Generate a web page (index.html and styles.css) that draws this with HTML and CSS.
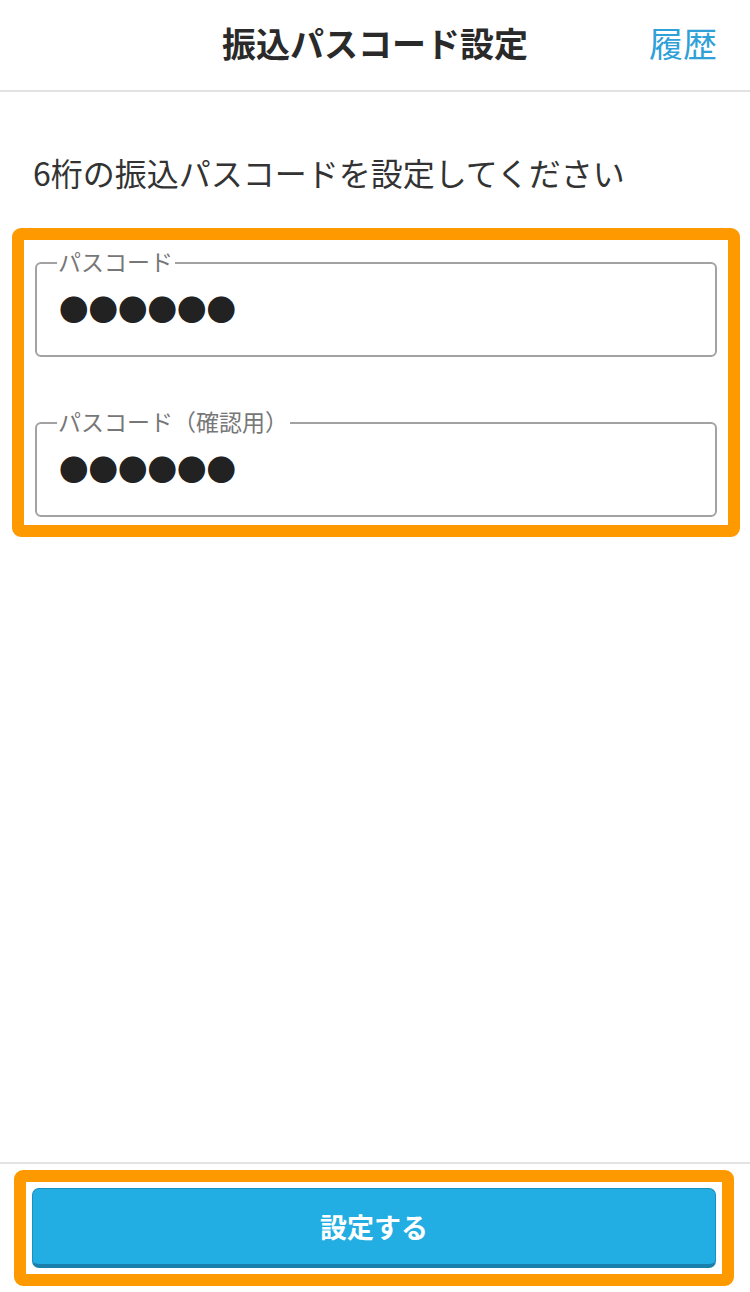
FILE: index.html
```html
<!DOCTYPE html>
<html lang="ja">
<head>
<meta charset="utf-8">
<title>振込パスコード設定</title>
<link rel="stylesheet" href="styles.css">
</head>
<body>
<div class="page">
  <header class="header">
    <h1 class="title">振込パスコード設定</h1>
    <a class="history" href="#">履歴</a>
  </header>
  <main class="main">
    <p class="lead">6桁の振込パスコードを設定してください</p>
    <div class="highlight highlight-fields">
      <fieldset class="field">
        <legend class="field-label">パスコード</legend>
        <div class="field-value">●●●●●●</div>
      </fieldset>
      <fieldset class="field field-second">
        <legend class="field-label">パスコード（確認用）</legend>
        <div class="field-value">●●●●●●</div>
      </fieldset>
    </div>
  </main>
  <footer class="footer">
    <div class="highlight highlight-button">
      <button class="submit" type="button">設定する</button>
    </div>
  </footer>
</div>
</body>
</html>
```

FILE: styles.css
```css
* { box-sizing: border-box; }
html, body { margin: 0; padding: 0; }
body {
  background: #fff;
  font-family: "Noto Sans CJK JP", "Noto Sans", sans-serif;
  color: #333;
}
.page {
  width: 750px;
  height: 1292px;
  display: flex;
  flex-direction: column;
}
.header {
  height: 92px;
  padding-bottom: 4px;
  border-bottom: 2px solid #e2e2e2;
  display: flex;
  align-items: center;
  justify-content: center;
  position: relative;
}
.title {
  margin: 0;
  font-size: 34px;
  font-weight: 700;
  color: #2a2a2a;
  line-height: 44px;
}
.history {
  position: absolute;
  right: 33px;
  top: 21px;
  font-size: 34px;
  line-height: 44px;
  color: #2fa0d8;
  text-decoration: none;
}
.main {
  flex: 1;
  display: flex;
  flex-direction: column;
}
.lead {
  margin: 58px 0 34px 33px;
  font-size: 32px;
  line-height: 44px;
  color: #333;
}
.highlight {
  border: 12px solid #ff9900;
  border-radius: 9px;
}
.highlight-fields {
  margin: 0 10px 0 12px;
  padding: 9px 11px 8px 11px;
  display: flex;
  flex-direction: column;
  gap: 52px;
}
.field {
  margin: 0;
  border: 2px solid #a2a2a2;
  border-radius: 6px;
  padding: 16px 20px 32px 20px;
  min-width: 0;
}
.field-label {
  padding: 0 2px 4px 1px;
  font-size: 23px;
  line-height: 24px;
  color: #777;
}
.field-value {
  height: 30px;
  line-height: 30px;
  font-size: 29.5px;
  color: #222;
  margin-left: 2px;
  white-space: nowrap;
}
.footer {
  border-top: 2px solid #e3e3e3;
  padding: 6px 16px 6px 14px;
}
.highlight-button {
  padding: 6px;
}
.submit {
  display: block;
  width: 100%;
  height: 80px;
  border: 1px solid #1b8fc2;
  border-bottom: 4px solid #1a7fab;
  border-radius: 7px;
  background: #22ade3;
  color: #fff;
  font-family: "Noto Sans CJK JP", "Noto Sans", sans-serif;
  font-size: 27px;
  font-weight: 700;
  line-height: 1;
  padding: 0;
}
```
